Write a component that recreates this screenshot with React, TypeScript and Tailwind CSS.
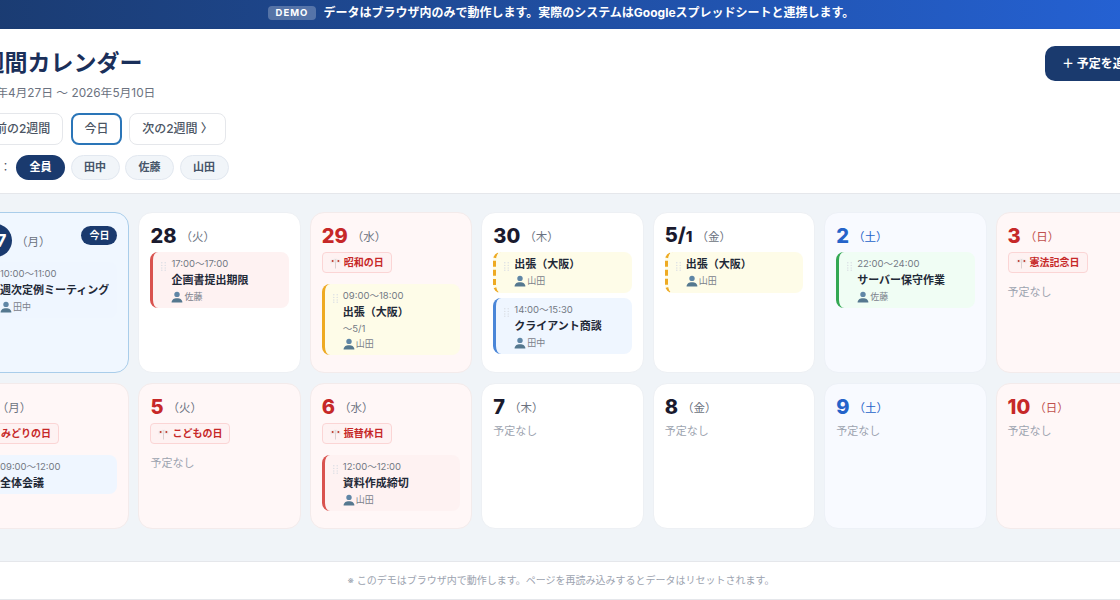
type Tone = "red" | "yellow" | "blue" | "green";

type CalEvent = {
  tone: Tone;
  time?: string;
  title: string;
  until?: string;
  who?: string;
  dashed?: boolean;
};

type Day = {
  num: string;
  small?: string;
  week: string;
  kind?: "holiday" | "sat" | "sun" | "today";
  holiday?: string;
  events?: CalEvent[];
};

const days: Day[] = [
  {
    num: "27",
    week: "月",
    kind: "today",
    events: [{ tone: "blue", time: "10:00〜11:00", title: "週次定例ミーティング", who: "田中" }],
  },
  {
    num: "28",
    week: "火",
    events: [{ tone: "red", time: "17:00〜17:00", title: "企画書提出期限", who: "佐藤" }],
  },
  {
    num: "29",
    week: "水",
    kind: "holiday",
    holiday: "昭和の日",
    events: [{ tone: "yellow", time: "09:00〜18:00", title: "出張（大阪）", until: "〜5/1", who: "山田" }],
  },
  {
    num: "30",
    week: "木",
    events: [
      { tone: "yellow", title: "出張（大阪）", who: "山田", dashed: true },
      { tone: "blue", time: "14:00〜15:30", title: "クライアント商談", who: "田中" },
    ],
  },
  {
    num: "5/",
    small: "1",
    week: "金",
    events: [{ tone: "yellow", title: "出張（大阪）", who: "山田", dashed: true }],
  },
  {
    num: "2",
    week: "土",
    kind: "sat",
    events: [{ tone: "green", time: "22:00〜24:00", title: "サーバー保守作業", who: "佐藤" }],
  },
  { num: "3", week: "日", kind: "sun", holiday: "憲法記念日" },
  {
    num: "4",
    week: "月",
    kind: "holiday",
    holiday: "みどりの日",
    events: [{ tone: "blue", time: "09:00〜12:00", title: "全体会議" }],
  },
  { num: "5", week: "火", kind: "holiday", holiday: "こどもの日" },
  {
    num: "6",
    week: "水",
    kind: "holiday",
    holiday: "振替休日",
    events: [{ tone: "red", time: "12:00〜12:00", title: "資料作成締切", who: "山田" }],
  },
  { num: "7", week: "木" },
  { num: "8", week: "金" },
  { num: "9", week: "土", kind: "sat" },
  { num: "10", week: "日", kind: "sun" },
];

const toneClass: Record<Tone, string> = {
  red: "bg-[#fef2f2] border-[#d9534f]",
  yellow: "bg-[#fefce8] border-[#eeaa22]",
  blue: "bg-[#eff6ff] border-[#4a86d8]",
  green: "bg-[#f0fdf4] border-[#34a853]",
};

function PersonIcon() {
  return (
    <svg width="12" height="12" viewBox="0 0 12 12" className="shrink-0">
      <circle cx="6" cy="3.4" r="2.7" fill="#5f86a6" />
      <path d="M0.6 11.5c0-2.9 2.3-4.3 5.4-4.3s5.4 1.4 5.4 4.3z" fill="#55788f" />
    </svg>
  );
}

function FlagIcon() {
  return (
    <svg width="11" height="12" viewBox="0 0 11 12" className="shrink-0">
      <path d="M5.5 2v9.5" stroke="#d2c6c6" strokeWidth="0.8" />
      <path d="M5.2 1.5L0.5 3v3.4l4.7-1z" fill="#efe9e9" />
      <path d="M5.8 1.5L10.5 3v3.4l-4.7-1z" fill="#efe9e9" />
      <circle cx="2.6" cy="4" r="1" fill="#c0392b" />
      <circle cx="8.4" cy="4" r="1" fill="#c0392b" />
    </svg>
  );
}

function DragHandle() {
  return (
    <svg width="5" height="9" viewBox="0 0 5 9" className="absolute left-[8px] top-[10px]">
      {[0.8, 3.4, 6, 8.2].map((y) => (
        <g key={y} fill="#d9dde3">
          <circle cx="0.8" cy={y} r="0.7" />
          <circle cx="4.2" cy={y} r="0.7" />
        </g>
      ))}
    </svg>
  );
}

function EventCard({ event }: { event: CalEvent }) {
  return (
    <div
      className={`relative mb-[5px] flex flex-col gap-[2px] rounded-lg border-l-[3px] pl-[18px] pr-1 ${
        event.dashed ? "border-dashed py-[4.5px]" : "py-[3.5px]"
      } ${toneClass[event.tone]}`}
    >
      <DragHandle />
      {event.time && <div className="h-[15px] text-[9.5px] leading-[15px] text-[#737984]">{event.time}</div>}
      <div className="h-[15px] text-[11px] font-bold leading-[15px] whitespace-nowrap text-[#1f2937]">{event.title}</div>
      {event.until && <div className="h-[13px] text-[9.5px] leading-[13px] text-[#737984]">{event.until}</div>}
      {event.who && (
        <div className="flex h-[15px] items-center gap-[1px] text-[9px] text-[#7b818b]">
          <PersonIcon />
          {event.who}
        </div>
      )}
    </div>
  );
}

function DayCard({ day }: { day: Day }) {
  const isToday = day.kind === "today";
  const red = day.kind === "holiday" || day.kind === "sun";
  const bg = isToday
    ? "bg-[#f0f7ff] border-[#a9cdea]"
    : red
      ? "bg-[#fff7f7] border-[#f3ebeb]"
      : day.kind === "sat"
        ? "bg-[#f8faff] border-[#edf1f7]"
        : "bg-white border-[#edf0f4]";
  const numColor = red ? "text-[#c62828]" : day.kind === "sat" ? "text-[#2563c9]" : "text-[#1a1a2e]";
  const weekColor =
    day.kind === "sun" ? "text-[#c0504d]" : day.kind === "sat" ? "text-[#2563c9]" : "text-[#6b7280]";

  return (
    <div className={`relative rounded-[14px] border px-[11px] pb-3 pt-[11px] ${bg}`}>
      {isToday && (
        <span className="absolute right-[11px] top-[13px] rounded-full bg-[#1a3a6e] px-2 py-[2px] text-[10px] font-bold leading-[15px] text-white">
          今日
        </span>
      )}
      <div className={`flex items-center gap-1 ${isToday ? "mb-[5px]" : "mb-[4px] h-[24px]"}`}>
        {isToday ? (
          <span className="flex h-[33px] w-[33px] items-center justify-center rounded-full bg-[#1a3a6e] text-[18px] font-bold text-white">
            {day.num}
          </span>
        ) : (
          <span className={`text-[20px] font-extrabold leading-6 ${numColor}`}>
            {day.num}
            {day.small && <span className="text-[15px]">{day.small}</span>}
          </span>
        )}
        <span className={`mt-1 text-[11.5px] ${weekColor}`}>（{day.week}）</span>
      </div>
      {day.holiday && (
        <div className="mb-[11px] mt-[1px] flex h-[21px] w-fit items-center gap-[3px] rounded border border-[#fbd5d5] bg-[#fef2f2] px-[7px] text-[10px] font-bold whitespace-nowrap text-[#c62828]">
          <FlagIcon />
          {day.holiday}
        </div>
      )}
      {day.events?.map((event) => (
        <EventCard key={event.title} event={event} />
      ))}
      {!day.events && <div className="text-[11px] leading-[16px] text-[#9ca3af]">予定なし</div>}
    </div>
  );
}

const navButton = "h-8 rounded-lg bg-white text-[12px] font-medium whitespace-nowrap text-[#4b5563]";
const pill = "h-[25px] w-[49px] rounded-full text-[11px] font-bold";

export default function App() {
  return (
    <div
      className="h-[600px] w-[1120px] overflow-hidden bg-white"
      style={{ fontFamily: 'Inter, "Noto Sans CJK JP", sans-serif' }}
    >
      <div className="ml-[-57px] flex h-[600px] w-[1239px] flex-col">
        {/* Demo banner */}
        <div className="flex h-[29px] shrink-0 items-center justify-center gap-[7px] bg-gradient-to-r from-[#1a3a6e] to-[#2563d8] pb-[3px] pr-[3px] text-[12px] font-bold text-white">
          <span className="rounded-[4px] bg-white/25 px-2 text-[9.5px] leading-[14px] tracking-[1px]">DEMO</span>
          データはブラウザ内のみで動作します。実際のシステムはGoogleスプレッドシートと連携します。
        </div>

        {/* Header */}
        <div className="h-[165px] shrink-0 border-b border-[#e5e7eb] px-6 pt-[17px] shadow-sm">
          <div className="flex items-start justify-between">
            <div>
              <h1 className="mt-[1px] text-[23px] font-bold leading-8 text-[#1a2f5a]">2週間カレンダー</h1>
              <p className="mt-[5px] text-[11.8px] leading-[18px] text-[#6b7280]">2026年4月27日 〜 2026年5月10日</p>
            </div>
            <button className="h-[35px] w-[113px] rounded-[10px] bg-[#1a3a6e] pl-[17px] text-left text-[12px] font-bold whitespace-nowrap text-white">
              ＋ 予定を追加
            </button>
          </div>
          <div className="mt-[11px] flex gap-2">
            <button className={`${navButton} w-[96px] border-[1.5px] border-[#e5e7eb]`}>〈 前の2週間</button>
            <button className={`${navButton} w-[51px] border-2 border-[#2a75b8]`}>今日</button>
            <button className={`${navButton} ml-[-1px] w-[97px] border-[1.5px] border-[#e5e7eb]`}>次の2週間 〉</button>
          </div>
          <div className="mt-[10px] flex items-center gap-[5.5px]">
            <span className="mr-[-0.5px] w-[44px] text-[11px] whitespace-nowrap text-[#4b5563]">担当者：</span>
            <button className={`${pill} bg-[#1a3a6e] text-white`}>全員</button>
            {["田中", "佐藤", "山田"].map((name) => (
              <button key={name} className={`${pill} border border-[#e2e8f0] bg-[#f1f5f9] text-[#475569]`}>
                {name}
              </button>
            ))}
          </div>
        </div>

        {/* Calendar */}
        <div className="flex-1 bg-[#f0f4f8] px-6 pt-[18px]">
          <div className="grid grid-cols-7 gap-x-[9px] gap-y-[10px]">
            {days.map((day) => (
              <DayCard key={day.num + day.week} day={day} />
            ))}
          </div>
        </div>

        {/* Footer */}
        <div className="flex h-[39px] shrink-0 items-center justify-center border-t border-b border-[#e5e7eb] pr-[3px] text-[10px] text-[#9ca3af]">
          ※ このデモはブラウザ内で動作します。ページを再読み込みするとデータはリセットされます。
        </div>
      </div>
    </div>
  );
}
